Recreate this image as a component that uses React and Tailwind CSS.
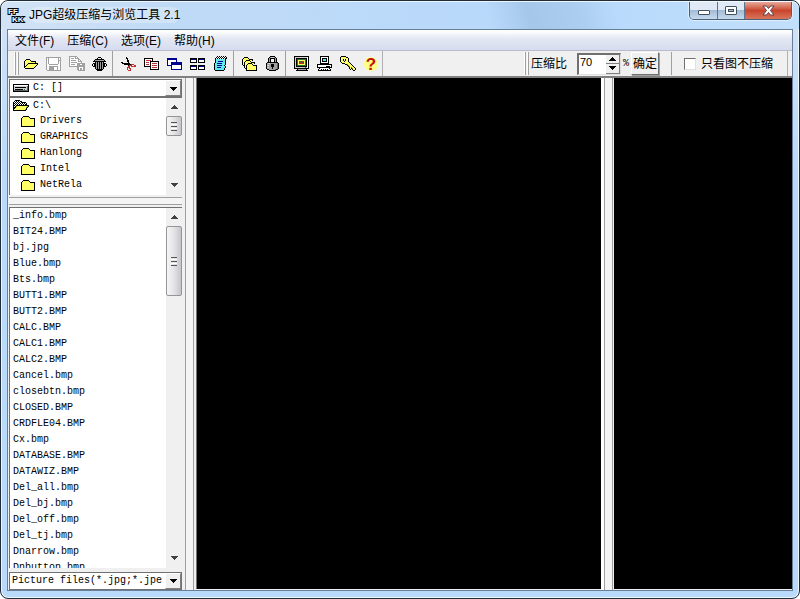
import { useState } from 'react';
import clsx from 'clsx';

const PALETTE = {
    k: '#000000',
    w: '#ffffff',
    y: '#ffff66',
    o: '#8c8c00',
    g: '#a0a0a0',
    d: '#606060',
    l: '#d0d0d0',
    b: '#000090',
    r: '#c03030',
    c: '#60e8f0',
    n: '#207830',
};

// Small bitmap icons, one character per pixel
const ICONS = {
    open: [
        '...kkkk.........',
        '..kyyyyk........',
        '.kyyyyyykkkkk...',
        '.kyyyyyyyyyyk...',
        '.kyyykkkkkkkkkk.',
        '.kyykyyyyyyyyyk.',
        '.kykyyyyyyyyyk..',
        '.kkyyyyyyyyyk...',
        '.kyyyyyyyyyk....',
        '..kkkkkkkkk.....',
    ],
    save: [
        'ggggggggggggggg',
        'gwgwwwwwwwwwgwg',
        'gwgwwwwwwwwwgwg',
        'gwgwwwwwwwwwggg',
        'gwgwwwwwwwwwgwg',
        'gwgwwwwwwwwwgwg',
        'gwgwwwwwwwwwgwg',
        'gwwgggggggggwwg',
        'gwwwwwwwwwwwwwg',
        'gwwgggggggggwwg',
        'gwwgggggwwwgwwg',
        'gwwgggggwwwgwwg',
        'gwwgggggwwwgwwg',
        '.gggggggggggggg',
    ],
    saveAs: [
        'gggggggg........',
        'gwwwwwgwg.......',
        'gwgggwgggg......',
        'gwwwwwwwwgg.....',
        'gwgggggwwgwg....',
        'gwwwwwwwwgggg...',
        'gwggggggwwwwg...',
        'gwwwwwwwgggggggg',
        'gwggggwwgggwwggg',
        'gwwwwwwwgggggggg',
        'gggggggggggggggg',
        '........ggwwwwgg',
        '........ggwggwgg',
        '........ggwggwgg',
        '.........ggggggg',
    ],
    trash: [
        '......kkk.......',
        '.....k...k......',
        '...kkkkkkkkk....',
        '..kgggggggggk...',
        '.kkkkkkkkkkkkk..',
        '...kgkgkgkgk....',
        '.kkkgkgkgkgkkk..',
        'k.kkgkgkgkgkk.k.',
        'k.kkgkgkgkgkk.k.',
        '.kkkgkgkgkgkkk..',
        '...kgkgkgkgk....',
        '...kgkgkgkgk....',
        '....kkkkkkk.....',
        '.....kkkkk......',
    ],
    cut: [
        '.....k..........',
        '.....kk.........',
        '......k.........',
        '......kk........',
        '......kk........',
        'kk.....k........',
        '.kkkkkkkk.......',
        '...kkkkkkkrrr...',
        '.......krrr..rr.',
        '.......rr.rrrrr.',
        '......rrr.......',
        '......r.rr......',
        '......r..r......',
        '.......rrr......',
    ],
    copy: [
        'kkkkkkkkk.......',
        'kwwwwwwwk.......',
        'kwrrrrrwk.......',
        'kwwwwwkkkkkkkkk.',
        'kwrrrwkwwwwwwwk.',
        'kwwwwwkwrrrrrwk.',
        'kwrrrwkwwwwwwwk.',
        'kwwwwwkwrrrrrwk.',
        'kkkkkkkwwwwwwwk.',
        '......kwrrrrrwk.',
        '......kwwwwwwwk.',
        '......kkkkkkkkk.',
    ],
    cascade: [
        'bbbbbbbbbb......',
        'bbbbbbbbbb......',
        'bwwwwwwwwb......',
        'bwwwwwwwwb......',
        'bwwwbbbbbbbbbbb.',
        'bwwwbbbbbbbbbbb.',
        'bwwwbbbbbbbbbbb.',
        'bbbbbwwwwwwwwwb.',
        '....bwwwwwwwwwb.',
        '....bwwwwwwwwwb.',
        '....bwwwwwwwwwb.',
        '....bbbbbbbbbbb.',
    ],
    tile: [
        'kkkkkkk.kkkkkkk.',
        'kbbbbbk.kbbbbbk.',
        'kwwwwwk.kwwwwwk.',
        'kwwwwwk.kwwwwwk.',
        'kkkkkkk.kkkkkkk.',
        '................',
        '................',
        'kkkkkkk.kkkkkkk.',
        'kbbbbbk.kbbbbbk.',
        'kwwwwwk.kwwwwwk.',
        'kwwwwwk.kwwwwwk.',
        'kkkkkkk.kkkkkkk.',
    ],
    notes: [
        '...k.k.k.k.k.',
        '..kwkwkwkwkwk',
        '.kwkwkwkwkwkk',
        '.kccccccccck.',
        '.kccccccccck.',
        '.kccbbbbbcck.',
        '.kccccccccck.',
        'kccbbbbbccck.',
        'kcccccccccck.',
        'kccbbbbbcck..',
        'kcccccccccck.',
        'kccbbbbcccck.',
        'kccccccccck..',
        'kccccccccck..',
        '.kkkkkkkkk...',
    ],
    folders: [
        '..kkkk..........',
        '.kyyyyk.........',
        'kyyyyyykkkk.....',
        'kyyykkkkyyk.....',
        'kyykyyyyk.......',
        'kykyyyyyykkkk...',
        'kykyyykkkkyyk...',
        'kykyykyyyyk.....',
        '.kkykyyyyyykkkk.',
        '..kykyyyyyyyyyk.',
        '..kykyyyyyyyyyk.',
        '...kkyyyyyyyyyk.',
        '....kyyyyyyyyyk.',
        '....kkkkkkkkkkk.',
    ],
    lock: [
        '....kkkkk....',
        '...kglllgk...',
        '..kgkkkkkgk..',
        '..kgk...kgk..',
        '..kgk...kgk..',
        '..kgk...kgk..',
        '.kkkkkkkkkkk.',
        'kgllgggggggdk',
        'kggggkkkgggdk',
        'kllggkkkgggdk',
        'kggggkkkgggdk',
        'kllgggkggggdk',
        'kgggggkggggdk',
        '.kkggggggdkk.',
        '...kkkkkkk...',
    ],
    monitor: [
        'kkkkkkkkkkkkkkk',
        'kllllllllllllwk',
        'klkkkkkkkkkkkwk',
        'klknnnnnnnnnkwk',
        'klknyyyyyyynkwk',
        'klknynnnrrynkwk',
        'klknynrrnnynkwk',
        'klknynrrrnynkwk',
        'klknyyyyyyynkwk',
        'klknnnnnnnnnkwk',
        'klkkkkkkkkkkkwk',
        'kllllllllllnlwk',
        'kkkkkkkkkkkkkkk',
        '...kggggggggk..',
        '..kkkkkkkkkkkk.',
    ],
    computer: [
        '...kkkkkkkkk...',
        '...kwwwwwwwk...',
        '...kwkkkkkwk...',
        '...kwkccckwk...',
        '...kwkccckwk...',
        '...kwkkkkkwk...',
        '...kwwwwwwwk...',
        '...kkkkkkkkk...',
        'kkkkkkkkkkkkkkk',
        'kwwwwwwwwwwwwwk',
        'kwwwwwwwwkkkkwk',
        'kkkkkkkkkkkkkkk',
        '..kwwwwwwwwwk..',
        '.kwwkwkwkwkwwk.',
        '.kkkkkkkkkkkkk.',
    ],
    key: [
        '.kkkkk..........',
        'kyyyyykk........',
        'kyyyyyyyk.......',
        'kyyk.kyyk.......',
        'kyyk.kyyk.......',
        'kyyykyyyk.......',
        '.kyyyyyyyk......',
        '..kkkyyyyyk.....',
        '.....kkoyyyk....',
        '.......koyyyk...',
        '........koyyyk..',
        '.........kyoyyk.',
        '.........kykoyyk',
        '..........k.kyyk',
        '.............kk.',
    ],
    folder: [
        '...kkkkkk.......',
        '..kyyyyyyk......',
        '.kyyyyyyyykkkkk.',
        '.kyyyyyyyyyyyyk.',
        '.kyyyyyyyyyyyyk.',
        '.kyyyyyyyyyyyyk.',
        '.kyyyyyyyyyyyyk.',
        '.kyyyyyyyyyyyyk.',
        '.kyyyyyyyyyyyyk.',
        '.kyyyyyyyyyyyyk.',
        '.kkkkkkkkkkkkkk.',
    ],
    folderOpen: [
        '..kkkkk.........',
        '.kwkwkwkk.......',
        'kwkwkwkwkkkkk...',
        'kkwkwkwkwkwkwk..',
        'kwkwkwkwkwkwkk..',
        'kkwkkkkkkkkkkkkk',
        'kwkoyyyyyyyyyyok',
        'kkkyyyyyyyyyyok.',
        'kkyyyyyyyyyyyk..',
        'kyyyyyyyyyyyok..',
        'kkkkkkkkkkkkk...',
    ],
    drive: [
        'kkkkkkkkkkkkkkkk',
        'kwwwwwwwwwwwwwwk',
        'kllllllllllllldk',
        'klkkkkkkkkkkkldk',
        'kllllllllllllldk',
        'klkkkkkkkklnlldk',
        'kddddddddddddddk',
        'kkkkkkkkkkkkkkkk',
    ],
};

const TOOLS = [
    [
        { icon: 'open', label: '打开' },
        { icon: 'save', label: '保存' },
        { icon: 'saveAs', label: '另存为' },
        { icon: 'trash', label: '删除' },
    ],
    [
        { icon: 'cut', label: '剪切' },
        { icon: 'copy', label: '复制' },
        { icon: 'cascade', label: '层叠' },
        { icon: 'tile', label: '平铺' },
        { icon: 'notes', label: '记事本' },
    ],
    [
        { icon: 'folders', label: '批量' },
        { icon: 'lock', label: '锁定' },
    ],
    [
        { icon: 'monitor', label: '全屏' },
        { icon: 'computer', label: '系统' },
        { icon: 'key', label: '注册' },
        { icon: 'help', label: '帮助' },
    ],
];

const MENUS = ['文件(F)', '压缩(C)', '选项(E)', '帮助(H)'];

const FOLDERS = ['Drivers', 'GRAPHICS', 'Hanlong', 'Intel', 'NetRela'];

const FILES = [
    '_info.bmp', 'BIT24.BMP', 'bj.jpg', 'Blue.bmp', 'Bts.bmp', 'BUTT1.BMP',
    'BUTT2.BMP', 'CALC.BMP', 'CALC1.BMP', 'CALC2.BMP', 'Cancel.bmp',
    'closebtn.bmp', 'CLOSED.BMP', 'CRDFLE04.BMP', 'Cx.bmp', 'DATABASE.BMP',
    'DATAWIZ.BMP', 'Del_all.bmp', 'Del_bj.bmp', 'Del_off.bmp', 'Del_tj.bmp',
    'Dnarrow.bmp', 'Dnbutton.bmp',
];

const Icon = ({ name }) => {
    const rows = ICONS[name];
    const width = Math.max(...rows.map((row) => row.length));

    return (
        <svg width={width} height={rows.length} shapeRendering="crispEdges" className="shrink-0" aria-hidden="true">
            {rows.map((row, y) =>
                [...row].map((ch, x) =>
                    PALETTE[ch] ? <rect key={`${x}-${y}`} x={x} y={y} width="1" height="1" fill={PALETTE[ch]} /> : null
                )
            )}
        </svg>
    );
};

const HelpIcon = () => (
    <svg width="16" height="16" viewBox="0 0 16 16" aria-hidden="true">
        <circle cx="8" cy="8" r="7" fill="#ffff80" />
        <text x="8" y="14" textAnchor="middle" fill="#c01010" fontSize="17" fontWeight="bold" fontFamily="Liberation Sans, sans-serif">?</text>
    </svg>
);

const Logo = () => (
    <svg width="16" height="16" viewBox="0 0 16 16" className="shrink-0 overflow-visible" aria-hidden="true">
        <g fill="#fff" stroke="#000" strokeWidth="2" paintOrder="stroke" fontSize="8" fontWeight="bold" fontFamily="Liberation Sans, sans-serif">
            <text x="0" y="7">FF</text>
            <text x="4" y="15">KK</text>
        </g>
    </svg>
);

const Arrow = ({ up }) => (
    <svg width="7" height="4" viewBox="0 0 7 4" shapeRendering="crispEdges" aria-hidden="true">
        <path d={up ? 'M3 0h1v1h1v1h1v1h1v1H0V3h1V2h1V1h1z' : 'M0 0h7v1H6v1H5v1H4v1H3V3H2V2H1V1H0z'} fill="currentColor" />
    </svg>
);

const ScrollBar = ({ thumb }) => (
    <div className="flex w-4 shrink-0 flex-col bg-[#f0f0f0] text-[#404040]">
        <button aria-label="Scroll up" className="flex h-4 shrink-0 items-center justify-center pt-0.5"><Arrow up /></button>
        <div className="flex-1 pt-0.5">
            <div className={clsx('flex flex-col items-center justify-center gap-px rounded-xs border border-[#959595] bg-linear-to-r from-[#f5f5f5] via-[#e4e4e8] to-[#c4c5ca]', thumb)}>
                <span className="h-px w-1.5 bg-[#555]" />
                <span className="h-px w-1.5 bg-white" />
                <span className="h-px w-1.5 bg-[#555]" />
                <span className="h-px w-1.5 bg-white" />
                <span className="h-px w-1.5 bg-[#555]" />
            </div>
        </div>
        <button aria-label="Scroll down" className="flex h-5 shrink-0 items-center justify-center"><Arrow /></button>
    </div>
);

const Gripper = () => (
    <div className="flex gap-px py-px">
        <span className="w-0.5 border-r border-[#a0a0a0] bg-white" />
        <span className="w-0.5 border-r border-[#a0a0a0] bg-white" />
    </div>
);

const DropDown = ({ label, options, icon, flat }) => (
    <div className="relative flex h-[18px] shrink-0 items-center border border-[#707070] bg-white">
        {icon && <span className="absolute left-[3px]"><Icon name={icon} /></span>}
        <select aria-label={label} className={clsx('h-4 w-full appearance-none overflow-hidden pr-4 leading-4 outline-none', icon ? 'pl-[23px]' : 'pl-0.5')}>
            {options.map((option) => <option key={option}>{option}</option>)}
        </select>
        <span className={clsx(
            'pointer-events-none absolute right-0 flex h-4 w-4 items-center justify-center border border-t-white border-l-white border-r-[#808080] border-b-[#808080] bg-[#f0f0f0]',
            flat && 'pt-0.5'
        )}>
            <Arrow />
        </span>
    </div>
);

const TitleBar = () => (
    <header className="-mx-1.5 flex h-7 shrink-0 items-start justify-between rounded-t-lg border-t border-[#edf6ff] bg-[linear-gradient(75deg,#d3e3f5_0%,#bfdaf6_22%,#b9d9fb_61%,#a5c8ea_66%,#aacdf0_72%,#b9dafb_77%,#c2dffb_100%)] px-[7px]">
        <div className="flex items-center gap-[5px] pt-[5px]">
            <Logo />
            <h1 className="rounded-full bg-white/25 text-xs leading-4">JPG超级压缩与浏览工具 2.1</h1>
        </div>
        <div className="flex h-[18px] overflow-hidden rounded-b-[5px] border border-t-0 border-[#4a6078] shadow-[0_0_1px_1px_rgba(255,255,255,0.5)]">
            <button aria-label="Minimize" className="flex w-7 items-center justify-center border-r border-[#5c7690] bg-linear-to-b from-[#dfeaf6] from-45% via-[#a3bcd6] via-50% to-[#c7daee]">
                <span className="mt-1 h-[5px] w-3 rounded-[1px] border border-[#45505e] bg-white" />
            </button>
            <button aria-label="Maximize" className="flex w-[27px] items-center justify-center border-r border-[#5c7690] bg-linear-to-b from-[#dfeaf6] from-45% via-[#a3bcd6] via-50% to-[#c7daee]">
                <span className="flex h-[9px] w-3 items-center justify-center rounded-[1px] border border-[#45505e] bg-white">
                    <span className="h-[3px] w-1.5 border border-[#45505e] bg-[#a3bcd6]" />
                </span>
            </button>
            <button aria-label="Close" className="flex w-[46px] items-center justify-center bg-linear-to-b from-[#e7a99a] via-[#c8452c] via-50% to-[#d9745c]">
                <svg width="13" height="11" viewBox="0 0 13 11" aria-hidden="true">
                    <path d="M1 1h3.500l2 2.500 2-2.500H12L8.500 5.500 12 10H8.500l-2-2.500-2 2.500H1l3.500-4.500z" fill="#fff" stroke="#5e4048" />
                </svg>
            </button>
        </div>
    </header>
);

const MenuBar = () => (
    <nav className="flex h-5 shrink-0 gap-[13px] border-t border-white bg-linear-to-b from-white via-[#e4e8f4] via-40% to-[#d6dbee] pl-[7px] text-xs leading-[18px]">
        {MENUS.map((item) => <button key={item}>{item}</button>)}
    </nav>
);

const ToolBar = () => {
    const [ratio, setRatio] = useState(70);

    return (
        <div className="flex h-7 shrink-0 justify-between border-t border-b-2 border-t-[#b8bccb] border-b-[#808080] bg-[#f0f0f0]">
            <div className="flex border-r border-[#b0b0b0] pl-1.5">
                <Gripper />
                <div className="flex">
                    {TOOLS.map((group, i) => (
                        <div key={i} className={clsx('flex items-center', i > 0 && 'ml-px border-l border-[#a0a0a0] pl-1')}>
                            {group.map(({ icon, label }) => (
                                <button key={icon} aria-label={label} className="flex h-6 w-[23px] items-center justify-center">
                                    {icon === 'help' ? <HelpIcon /> : <Icon name={icon} />}
                                </button>
                            ))}
                        </div>
                    ))}
                </div>
            </div>

            <div className="mr-1 flex items-stretch border-r border-[#b0b0b0] pr-3.5 text-xs">
                <Gripper />
                <div className="flex items-center">
                    <label htmlFor="ratio" className="mr-2.5 ml-0.5">压缩比</label>
                    <div className="flex h-[22px] w-11 border-t-2 border-l-2 border-r border-b border-t-[#707070] border-l-[#707070] border-r-[#e0e0e0] border-b-[#e0e0e0] bg-white">
                        <input
                            id="ratio"
                            value={ratio}
                            onChange={(e) => setRatio(Number(e.target.value) || 0)}
                            className="h-3.5 w-full min-w-0 flex-1 pl-px text-[11px] leading-3.5 outline-none"
                        />
                        <div className="flex w-3.5 flex-col">
                            <button aria-label="Increase" onClick={() => setRatio(ratio + 1)} className="flex flex-1 items-center justify-center border-r border-b border-[#808080] bg-[#f0f0f0]"><Arrow up /></button>
                            <button aria-label="Decrease" onClick={() => setRatio(ratio - 1)} className="flex flex-1 items-center justify-center border-r border-b border-[#808080] bg-[#f0f0f0]"><Arrow /></button>
                        </div>
                    </div>
                    <span className="mr-0.5 ml-0.5 font-['Liberation_Mono',monospace] text-[10px]">%</span>
                    <button className="h-[23px] w-7 border border-t-white border-l-white border-r-[#707070] border-b-[#707070] shadow-[1px_1px_0_#a0a0a0]">确定</button>
                </div>
                <label className="my-px ml-3 flex items-center gap-[5px] border-l border-[#a0a0a0] pl-3">
                    <input type="checkbox" className="h-3 w-3 appearance-none border border-t-[#707070] border-l-[#707070] border-r-[#e0e0e0] border-b-[#e0e0e0] bg-white checked:bg-[#404040]" />
                    只看图不压缩
                </label>
            </div>
        </div>
    );
};

const Sidebar = () => (
    <aside className="flex w-[178px] shrink-0 flex-col border-r border-[#a0a0a0] pt-px pr-[3px] pl-px font-['Liberation_Mono',monospace] text-[10px] leading-4">
        <DropDown label="Drive" options={['C: []']} icon="drive" flat />

        <div className="flex h-[98px] shrink-0 border-t border-l border-[#707070] bg-white">
            <ul className="flex-1 overflow-hidden pl-[3px]">
                <li className="flex h-[15px] items-center gap-1"><Icon name="folderOpen" />C:\</li>
                {FOLDERS.map((folder) => (
                    <li key={folder} className="flex h-4 items-center gap-1 pl-[7px]"><Icon name="folder" />{folder}</li>
                ))}
            </ul>
            <ScrollBar thumb="h-5" />
        </div>

        <div className="my-0.5 h-2 shrink-0 border-y border-[#a0a0a0] bg-[#f4f4f4]" />

        <div className="flex min-h-0 flex-1 border-t border-l border-[#707070] bg-white">
            <ul className="flex-1 overflow-hidden pl-[3px]">
                {FILES.map((file) => <li key={file} className="h-4 leading-[15px]">{file}</li>)}
            </ul>
            <ScrollBar thumb="h-[70px]" />
        </div>

        <div className="mt-1 flex flex-col">
            <DropDown label="File type" options={['Picture files(*.jpg;*.jpe']} />
        </div>
    </aside>
);

const Splitter = () => (
    <div className="w-2 shrink-0 border-r border-[#a0a0a0] bg-[#f4f4f4]" />
);

export default function App() {
    return (
        <div className="flex h-screen flex-col overflow-hidden rounded-lg border border-[#202c3a] bg-linear-to-b from-[#d3e3f5] via-[#badafc] via-28% to-[#badafc] px-1.5 pb-[7px] font-['Liberation_Sans','Noto_Sans_CJK_SC',sans-serif] text-black shadow-[inset_0_0_0_1px_#edf6ff]">
            <TitleBar />
            <div className="flex min-h-0 flex-1 flex-col border border-[#66809c] bg-[#f0f0f0]">
                <MenuBar />
                <ToolBar />
                <main className="flex min-h-0 flex-1">
                    <Sidebar />
                    <Splitter />
                    <section aria-label="Original" className="mb-px ml-0.5 min-w-0 flex-[405_1_0%] border-l border-[#707070] bg-black" />
                    <div className="w-1 shrink-0 border-r border-[#a0a0a0] bg-white" />
                    <Splitter />
                    <section aria-label="Compressed" className="mb-px ml-px min-w-0 flex-[179_1_0%] bg-black" />
                </main>
            </div>
        </div>
    );
}
